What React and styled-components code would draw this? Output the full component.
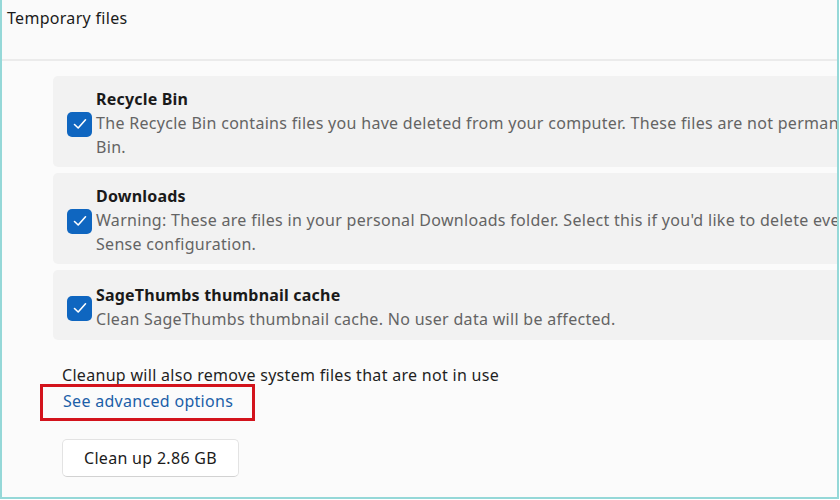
import React from "react";
import styled, { createGlobalStyle } from "styled-components";

const Global = createGlobalStyle`
  html, body {
    margin: 0;
    padding: 0;
    background: #ffffff;
  }
  body {
    font-family: "Noto Sans", "Open Sans", sans-serif;
    letter-spacing: 0.3px;
  }
`;

const items = [
  {
    title: "Recycle Bin",
    lines: [
      "The Recycle Bin contains files you have deleted from your computer. These files are not permanently deleted until you empty the Recycle",
      "Bin.",
    ],
  },
  {
    title: "Downloads",
    lines: [
      "Warning: These are files in your personal Downloads folder. Select this if you'd like to delete everything. This does not respect your Storage",
      "Sense configuration.",
    ],
  },
  {
    title: "SageThumbs thumbnail cache",
    lines: ["Clean SageThumbs thumbnail cache. No user data will be affected."],
  },
];

export default function App() {
  return (
    <>
      <Global />
      <Frame>
        <Header>Temporary files</Header>
        <Body>
          <List>
            {items.map((item) => (
              <Card key={item.title} $tall={item.lines.length > 1}>
                <Check>
                  <svg width="14" height="12" viewBox="0 0 14 12">
                    <path
                      d="M1.5 6.5 L5.2 10 L12.5 1.8"
                      fill="none"
                      stroke="#fff"
                      strokeWidth="1.6"
                      strokeLinecap="round"
                      strokeLinejoin="round"
                    />
                  </svg>
                </Check>
                <Info>
                  <Title>{item.title}</Title>
                  {item.lines.map((l) => (
                    <Desc key={l}>{l}</Desc>
                  ))}
                </Info>
              </Card>
            ))}
          </List>
          <Footer>
            <Note>Cleanup will also remove system files that are not in use</Note>
            <Link>See advanced options</Link>
            <Button>Clean up 2.86 GB</Button>
          </Footer>
        </Body>
      </Frame>
    </>
  );
}

const Frame = styled.div`
  box-sizing: border-box;
  width: 839px;
  height: 499px;
  border-left: 2px solid #95d8d8;
  border-right: 2px solid #95d8d8;
  border-bottom: 2px solid #95d8d8;
  background: #fbfbfb;
  overflow: hidden;
  display: flex;
  flex-direction: column;
`;

const Header = styled.div`
  flex: none;
  height: 61px;
  border-bottom: 2px solid #ebebeb;
  padding: 6px 0 0 5px;
  box-sizing: border-box;
  font-size: 16px;
  line-height: 24px;
  color: #1b1b1b;
  background: #fafafa;
`;

const Body = styled.div`
  padding: 15px 0 0 51px;
`;

const List = styled.div`
  display: flex;
  flex-direction: column;
  gap: 6px;
`;

const Card = styled.div`
  width: 900px;
  background: #f2f2f2;
  border-radius: 5px;
  display: flex;
  align-items: center;
  gap: 4px;
  padding: ${(p) => (p.$tall ? "11px 0 8px 14px" : "13px 0 9px 14px")};
`;

const Check = styled.div`
  flex: none;
  width: 25px;
  height: 25px;
  border-radius: 5px;
  background: #0f66c0;
  display: flex;
  align-items: center;
  justify-content: center;
  margin-top: 2px;
`;

const Info = styled.div`
  display: flex;
  flex-direction: column;
  min-width: 0;
`;

const Title = styled.div`
  font-size: 16px;
  line-height: 24px;
  font-weight: 700;
  color: #1a1a1a;
  white-space: nowrap;
  letter-spacing: 0.2px;
`;

const Desc = styled.div`
  font-size: 16px;
  line-height: 24px;
  color: #646464;
  white-space: nowrap;
`;

const Footer = styled.div`
  display: flex;
  flex-direction: column;
  align-items: flex-start;
  padding: 23px 0 0 9px;
`;

const Note = styled.div`
  font-size: 16px;
  line-height: 24px;
  color: #1f1f1f;
`;

const Link = styled.span`
  position: relative;
  margin-left: 1px;
  margin-top: 2px;
  font-size: 16px;
  line-height: 24px;
  color: #1b5fa8;
  &::after {
    content: "";
    position: absolute;
    left: -23px;
    right: -22px;
    top: -5px;
    bottom: -8px;
    border: 3px solid #d3131c;
  }
`;

const Button = styled.button`
  margin-top: 26px;
  width: 177px;
  height: 38px;
  background: #ffffff;
  border: 1px solid #e3e3e3;
  border-bottom-color: #d2d2d2;
  border-radius: 5px;
  font-family: "Noto Sans", "Open Sans", sans-serif;
  font-size: 16px;
  letter-spacing: 0.3px;
  color: #1b1b1b;
  padding: 0;
`;
